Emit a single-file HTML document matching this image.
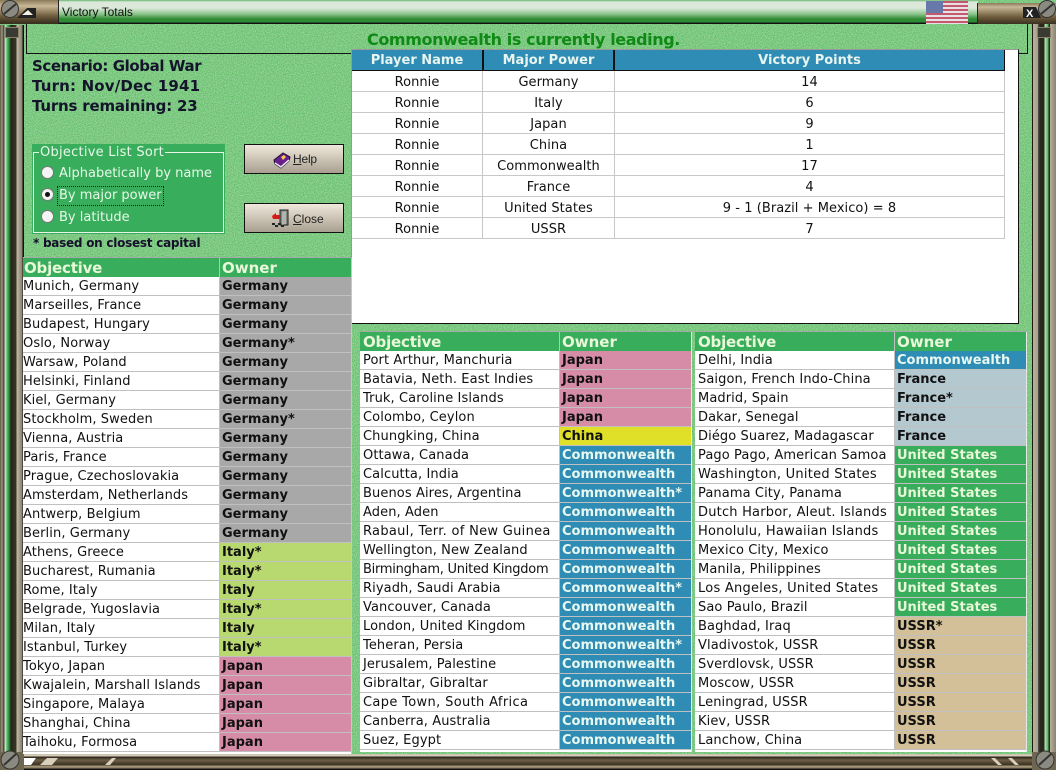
<!DOCTYPE html>
<html><head><meta charset="utf-8"><title>Victory Totals</title>
<style>
*{box-sizing:border-box;margin:0;padding:0}
html,body{width:1056px;height:770px;overflow:hidden;background:#6cc46f}
body{position:relative;font-family:"DejaVu Sans","Liberation Sans",sans-serif;font-size:13px;color:#111}
.a{position:absolute}
.t{position:absolute;white-space:nowrap}
.tbl{position:absolute;background:#fff;box-shadow:0 -1px #a8a8a8}
.h{display:flex;height:19px;background:#38ad5c;color:#e8f8d8;font-weight:bold;font-size:15px;line-height:21px}
.h span:first-child{width:197px;padding-left:1px;border-right:1px solid #c0c0c0;letter-spacing:-.2px}
.m .h span:first-child,.m .o{width:200px;padding-left:3px}
.h span:last-child{padding-left:2px}
.r{display:flex;height:19px;line-height:19px;border-bottom:1px solid #c0c0c0}
.o{width:197px;padding-left:0;background:#fff;border-right:1px solid #c0c0c0;white-space:nowrap;letter-spacing:.1px}
.w{flex:1;font-weight:bold;padding-left:2px;white-space:nowrap}
.G{background:#a8a8a8}.I{background:#b8d870}.J{background:#d68ca6}.C{background:#e0e028}
.W{background:#2f8cb4;color:#e8f8f0}.F{background:#b4c8d0}.U{background:#38ad5c;color:#e8f8d8}.S{background:#d4c098}
.vh{position:absolute;top:50px;height:20px;background:#2f8cb4;color:#e8f4f0;font-weight:bold;text-align:center;line-height:22px}
.vr{position:absolute;left:352px;width:653px;height:21px;display:flex;line-height:24px;text-align:center;border-bottom:1px solid #c8c8c8;border-right:1px solid #c8c8c8;letter-spacing:.05px}
.vr span{display:block;border-right:1px solid #c8c8c8}
.vr span:nth-child(1){width:131px}.vr span:nth-child(2){width:132px}.vr span:nth-child(3){flex:1;border:0}
.stripe{position:absolute;top:25px;bottom:0;width:24px;background:linear-gradient(90deg,#5a5440 0,#a09880 2px,#3a3626 4px,#d8ecd8 5px,#5cc070 7px,#2a8a3a 9px,#26281a 11px,#3a3626 16px,#c0b8a4 17px,#8a8270 22px,#111 23px)}
.stripeR{position:absolute;top:24px;bottom:14px;left:1032px;width:24px;background:linear-gradient(90deg,#1a1a10 0,#1a1a10 1px,#b8b09c 1px,#a89f88 6px,#555 6px,#2a2a1c 8px,#2a2a1c 12px,#b8e0b8 13px,#4fb85f 16px,#2a2a1c 17px,#2a2a1c 18px,#b8b09c 18px,#8a8270 24px)}
.btn{position:absolute;left:244px;width:100px;height:30px;border:1px solid #111;background:linear-gradient(180deg,#f0e8dc,#c8c0b0 55%,#a89f90);font-size:12px;font-family:"Liberation Sans",sans-serif;color:#222}
.rad{position:absolute;left:41px;width:13px;height:13px;border-radius:50%;background:#f4f4f4;border:1px solid #777}
.lb{position:absolute;left:59px;color:#e8f8e8;white-space:nowrap}
</style></head><body>
<svg class="a" style="left:0;top:0" width="1056" height="770"><filter id="n"><feTurbulence type="fractalNoise" baseFrequency=".9" numOctaves="2" seed="3"/><feColorMatrix values="0 0 0 0 .9  0 0 0 0 1  0 0 0 0 .9  0 0 0 .8 -.2"/></filter><rect width="1056" height="770" fill="#60bc66"/><rect width="1056" height="770" filter="url(#n)"/></svg>

<!-- title bar -->
<div class="a" style="left:58px;top:0;width:920px;height:24px;background:linear-gradient(180deg,#6ab574 0,#dce9da 2px,#dce9da 8px,#8cc48c 14px,#2f8a34 19px,#2e8d35 22px,#111 23px)"></div>
<div class="t" style="left:62px;top:5px;font:12px 'Liberation Sans',sans-serif;color:#111">Victory Totals</div>
<div class="a" style="left:0;top:0;width:59px;height:24px;background:linear-gradient(180deg,#8a7a5a,#c8b898 6px,#6e5c3c 16px,#3a3020 23px);border-right:1px solid #222"></div>
<div class="a" style="left:977px;top:3px;width:79px;height:21px;background:linear-gradient(180deg,#8a7a5a,#c8b898 4px,#6e5c3c 14px,#3a3020 21px);border-left:1px solid #222"></div>
<svg class="a" style="left:0;top:0" width="60" height="24"><circle cx="10" cy="9" r="8.5" fill="#8a8a80" stroke="#333"/><path d="M4 14L16 4" stroke="#333" stroke-width="2"/><path d="M17 18L27 8H36V18Z" fill="#222"/><path d="M22 15L28 10L33 15Z" fill="#f4f0e0"/></svg>
<svg class="a" style="left:1020px;top:0" width="36" height="24"><path d="M3 7H16L21 18H3Z" fill="#222"/><text x="6" y="17" font-size="11" font-weight="bold" fill="#fff" font-family="Liberation Sans">X</text><circle cx="27" cy="9" r="8.5" fill="#8a8a80" stroke="#333"/><path d="M21 14L33 4" stroke="#333" stroke-width="2"/></svg>
<svg class="a" style="left:926px;top:1px" width="42" height="23"><rect width="42" height="23" fill="#e8e0e4"/><g fill="#c4586c"><rect width="42" height="2"/><rect y="4" width="42" height="2"/><rect y="8" width="42" height="2"/><rect y="12" width="42" height="2"/><rect y="16" width="42" height="2"/><rect y="20" width="42" height="2"/></g><rect width="17" height="12" fill="#6878a8"/></svg>

<!-- frame -->
<div class="stripe"></div>
<div class="stripeR"></div>
<div class="a" style="left:5px;top:27px;width:14px;height:11px;background:#3a3a32;border:1px solid #8a8268"></div>
<div class="a" style="left:1037px;top:27px;width:14px;height:11px;background:#3a3a32;border:1px solid #8a8268"></div>
<div class="a" style="left:23px;top:754px;width:1010px;height:16px;background:linear-gradient(180deg,#c8c0ac 0,#d8d0bc 2px,#2a2418 3px,#6e6048 6px,#3a3020 11px,#a89c80 12px,#8a7c60 14px,#111 15px)"></div>
<div class="a" style="left:0;top:752px;width:24px;height:18px;background:#6e6650"></div>
<div class="a" style="left:1032px;top:752px;width:24px;height:18px;background:#6e6650"></div>
<svg class="a" style="left:0;top:745px" width="120" height="25"><circle cx="10" cy="15" r="9" fill="#8a8a80" stroke="#333"/><path d="M4 20L16 9" stroke="#333" stroke-width="2"/><path d="M24 13H36L31 20H24Z" fill="#fff"/><path d="M40 20L47 13H58L52 20Z" fill="#d8d0bc"/><path d="M105 20L112 13H116L110 20Z" fill="#d8d0bc"/></svg>
<svg class="a" style="left:990px;top:745px" width="66" height="25"><path d="M1 13L8 20H12L5 13ZM18 13L25 20H29L22 13Z" fill="#d8d0bc"/><circle cx="55" cy="15" r="9" fill="#8a8a80" stroke="#333"/><path d="M49 20L61 9" stroke="#333" stroke-width="2"/></svg>

<!-- heading panel outline -->
<div class="a" style="left:26px;top:24px;width:1002px;height:30px;border:1px solid #111;border-top:0"></div>
<div class="t" style="left:367px;top:30px;font-size:16px;font-weight:bold;color:#0f8a14;letter-spacing:-.4px">Commonwealth is currently leading.</div>

<!-- scenario -->
<div class="t" style="left:32px;top:57px;font-size:15px;font-weight:bold;color:#14142a;letter-spacing:-.4px">Scenario: Global War</div>
<div class="t" style="left:32px;top:77px;font-size:15px;font-weight:bold;color:#14142a;letter-spacing:.17px">Turn: Nov/Dec 1941</div>
<div class="t" style="left:32px;top:97px;font-size:15px;font-weight:bold;color:#14142a;letter-spacing:-.2px">Turns remaining: 23</div>

<!-- sort box -->
<div class="a" style="left:32px;top:144px;width:193px;height:90px;background:#38ad5c"></div>
<div class="a" style="left:33px;top:152px;width:191px;height:81px;border:1px solid #e8f4e8"></div>
<div class="t" style="left:39px;top:145px;background:#38ad5c;color:#e8f8e8;padding:0 1px;letter-spacing:.25px">Objective List Sort</div>
<div class="rad" style="top:166px"></div><div class="lb" style="top:166px">Alphabetically by name</div>
<div class="rad" style="top:188px"></div><div class="a" style="left:45px;top:192px;width:5px;height:5px;border-radius:50%;background:#111"></div>
<div class="lb" style="top:187px;left:58px;height:18px;line-height:17px;outline:1px dotted #301030;padding:0 1px">By major power</div>
<div class="rad" style="top:210px"></div><div class="lb" style="top:210px">By latitude</div>
<div class="t" style="left:33px;top:236px;font-size:12px;font-weight:bold;color:#14102a;letter-spacing:-.25px">* based on closest capital</div>

<!-- buttons -->
<div class="btn" style="top:144px"><svg class="a" style="left:28px;top:7px" width="18" height="17"><path d="M1 8L10 1L17 5L16 9L8 16L2 12Z" fill="#6a1f8e" stroke="#1a1030"/><path d="M2 11L8 15L16 8" fill="none" stroke="#e8e4e8" stroke-width="1.5"/><path d="M8 5L11 3L13 5L10 8Z" fill="#f0d040"/></svg><span class="a" style="left:48px;top:7px;letter-spacing:-.2px"><u>H</u>elp</span></div>
<div class="btn" style="top:203px"><svg class="a" style="left:26px;top:5px" width="20" height="20"><path d="M9 1H17V16H9Z" fill="#808880" stroke="#222"/><path d="M11 3L15 2V15L11 16Z" fill="#b0b4ac"/><path d="M1 7L5 4V6H9V10H2Z" fill="#d81818"/><path d="M1 14H4V16H7V14H10V16H13V18H10V16H7V18H4V16H1Z" fill="#222"/></svg><span class="a" style="left:48px;top:8px"><u>C</u>lose</span></div>

<!-- victory table -->
<div class="a" style="left:351px;top:49px;width:668px;height:275px;background:#fff;border-right:1px solid #111;border-bottom:1px solid #111;border-left:1px solid #999;border-top:1px solid #999"></div>
<div class="a" style="left:352px;top:50px;width:653px;height:21px;background:#111"></div>
<div class="vh" style="left:352px;width:130px">Player Name</div>
<div class="vh" style="left:484px;width:129px">Major Power</div>
<div class="vh" style="left:615px;width:389px">Victory Points</div>
<div class="vr" style="top:71px"><span>Ronnie</span><span>Germany</span><span>14</span></div>
<div class="vr" style="top:92px"><span>Ronnie</span><span>Italy</span><span>6</span></div>
<div class="vr" style="top:113px"><span>Ronnie</span><span>Japan</span><span>9</span></div>
<div class="vr" style="top:134px"><span>Ronnie</span><span>China</span><span>1</span></div>
<div class="vr" style="top:155px"><span>Ronnie</span><span>Commonwealth</span><span>17</span></div>
<div class="vr" style="top:176px"><span>Ronnie</span><span>France</span><span>4</span></div>
<div class="vr" style="top:197px"><span>Ronnie</span><span>United States</span><span>9 - 1 (Brazil + Mexico) = 8</span></div>
<div class="vr" style="top:218px"><span>Ronnie</span><span>USSR</span><span>7</span></div>

<!-- left list -->
<div class="tbl" style="left:23px;top:258px;width:329px;height:496px;border-right:1px solid #c8c8c8">
<div class="h"><span>Objective</span><span>Owner</span></div>
<div class="r"><span class="o">Munich, Germany</span><span class="w G">Germany</span></div>
<div class="r"><span class="o">Marseilles, France</span><span class="w G">Germany</span></div>
<div class="r"><span class="o">Budapest, Hungary</span><span class="w G">Germany</span></div>
<div class="r"><span class="o">Oslo, Norway</span><span class="w G">Germany*</span></div>
<div class="r"><span class="o">Warsaw, Poland</span><span class="w G">Germany</span></div>
<div class="r"><span class="o">Helsinki, Finland</span><span class="w G">Germany</span></div>
<div class="r"><span class="o">Kiel, Germany</span><span class="w G">Germany</span></div>
<div class="r"><span class="o">Stockholm, Sweden</span><span class="w G">Germany*</span></div>
<div class="r"><span class="o">Vienna, Austria</span><span class="w G">Germany</span></div>
<div class="r"><span class="o">Paris, France</span><span class="w G">Germany</span></div>
<div class="r"><span class="o">Prague, Czechoslovakia</span><span class="w G">Germany</span></div>
<div class="r"><span class="o">Amsterdam, Netherlands</span><span class="w G">Germany</span></div>
<div class="r"><span class="o">Antwerp, Belgium</span><span class="w G">Germany</span></div>
<div class="r"><span class="o">Berlin, Germany</span><span class="w G">Germany</span></div>
<div class="r"><span class="o">Athens, Greece</span><span class="w I">Italy*</span></div>
<div class="r"><span class="o">Bucharest, Rumania</span><span class="w I">Italy*</span></div>
<div class="r"><span class="o">Rome, Italy</span><span class="w I">Italy</span></div>
<div class="r"><span class="o">Belgrade, Yugoslavia</span><span class="w I">Italy*</span></div>
<div class="r"><span class="o">Milan, Italy</span><span class="w I">Italy</span></div>
<div class="r"><span class="o">Istanbul, Turkey</span><span class="w I">Italy*</span></div>
<div class="r"><span class="o">Tokyo, Japan</span><span class="w J">Japan</span></div>
<div class="r"><span class="o">Kwajalein, Marshall Islands</span><span class="w J">Japan</span></div>
<div class="r"><span class="o">Singapore, Malaya</span><span class="w J">Japan</span></div>
<div class="r"><span class="o">Shanghai, China</span><span class="w J">Japan</span></div>
<div class="r"><span class="o">Taihoku, Formosa</span><span class="w J">Japan</span></div>
</div>

<!-- middle list -->
<div class="tbl m" style="left:360px;top:332px;width:332px;height:420px;border-right:1px solid #e8e8e8">
<div class="h"><span>Objective</span><span>Owner</span></div>
<div class="r"><span class="o">Port Arthur, Manchuria</span><span class="w J">Japan</span></div>
<div class="r"><span class="o">Batavia, Neth. East Indies</span><span class="w J">Japan</span></div>
<div class="r"><span class="o">Truk, Caroline Islands</span><span class="w J">Japan</span></div>
<div class="r"><span class="o">Colombo, Ceylon</span><span class="w J">Japan</span></div>
<div class="r"><span class="o">Chungking, China</span><span class="w C">China</span></div>
<div class="r"><span class="o">Ottawa, Canada</span><span class="w W">Commonwealth</span></div>
<div class="r"><span class="o">Calcutta, India</span><span class="w W">Commonwealth</span></div>
<div class="r"><span class="o">Buenos Aires, Argentina</span><span class="w W">Commonwealth*</span></div>
<div class="r"><span class="o">Aden, Aden</span><span class="w W">Commonwealth</span></div>
<div class="r"><span class="o" style="letter-spacing:.3px">Rabaul, Terr. of New Guinea</span><span class="w W">Commonwealth</span></div>
<div class="r"><span class="o">Wellington, New Zealand</span><span class="w W">Commonwealth</span></div>
<div class="r"><span class="o" style="letter-spacing:-.25px">Birmingham, United Kingdom</span><span class="w W">Commonwealth</span></div>
<div class="r"><span class="o">Riyadh, Saudi Arabia</span><span class="w W">Commonwealth*</span></div>
<div class="r"><span class="o">Vancouver, Canada</span><span class="w W">Commonwealth</span></div>
<div class="r"><span class="o">London, United Kingdom</span><span class="w W">Commonwealth</span></div>
<div class="r"><span class="o">Teheran, Persia</span><span class="w W">Commonwealth*</span></div>
<div class="r"><span class="o">Jerusalem, Palestine</span><span class="w W">Commonwealth</span></div>
<div class="r"><span class="o">Gibraltar, Gibraltar</span><span class="w W">Commonwealth</span></div>
<div class="r"><span class="o" style="letter-spacing:.35px">Cape Town, South Africa</span><span class="w W">Commonwealth</span></div>
<div class="r"><span class="o">Canberra, Australia</span><span class="w W">Commonwealth</span></div>
<div class="r"><span class="o">Suez, Egypt</span><span class="w W">Commonwealth</span></div>
</div>

<!-- right list -->
<div class="tbl m" style="left:695px;top:332px;width:332px;height:420px;border-right:1px solid #e8e8e8">
<div class="h"><span>Objective</span><span>Owner</span></div>
<div class="r"><span class="o">Delhi, India</span><span class="w W">Commonwealth</span></div>
<div class="r"><span class="o">Saigon, French Indo-China</span><span class="w F">France</span></div>
<div class="r"><span class="o">Madrid, Spain</span><span class="w F">France*</span></div>
<div class="r"><span class="o">Dakar, Senegal</span><span class="w F">France</span></div>
<div class="r"><span class="o">Diégo Suarez, Madagascar</span><span class="w F">France</span></div>
<div class="r"><span class="o">Pago Pago, American Samoa</span><span class="w U">United States</span></div>
<div class="r"><span class="o" style="letter-spacing:.25px">Washington, United States</span><span class="w U">United States</span></div>
<div class="r"><span class="o">Panama City, Panama</span><span class="w U">United States</span></div>
<div class="r"><span class="o" style="letter-spacing:.2px">Dutch Harbor, Aleut. Islands</span><span class="w U">United States</span></div>
<div class="r"><span class="o" style="letter-spacing:.2px">Honolulu, Hawaiian Islands</span><span class="w U">United States</span></div>
<div class="r"><span class="o">Mexico City, Mexico</span><span class="w U">United States</span></div>
<div class="r"><span class="o">Manila, Philippines</span><span class="w U">United States</span></div>
<div class="r"><span class="o" style="letter-spacing:.25px">Los Angeles, United States</span><span class="w U">United States</span></div>
<div class="r"><span class="o">Sao Paulo, Brazil</span><span class="w U">United States</span></div>
<div class="r"><span class="o">Baghdad, Iraq</span><span class="w S">USSR*</span></div>
<div class="r"><span class="o">Vladivostok, USSR</span><span class="w S">USSR</span></div>
<div class="r"><span class="o">Sverdlovsk, USSR</span><span class="w S">USSR</span></div>
<div class="r"><span class="o">Moscow, USSR</span><span class="w S">USSR</span></div>
<div class="r"><span class="o">Leningrad, USSR</span><span class="w S">USSR</span></div>
<div class="r"><span class="o">Kiev, USSR</span><span class="w S">USSR</span></div>
<div class="r"><span class="o">Lanchow, China</span><span class="w S">USSR</span></div>
</div>
</body></html>
